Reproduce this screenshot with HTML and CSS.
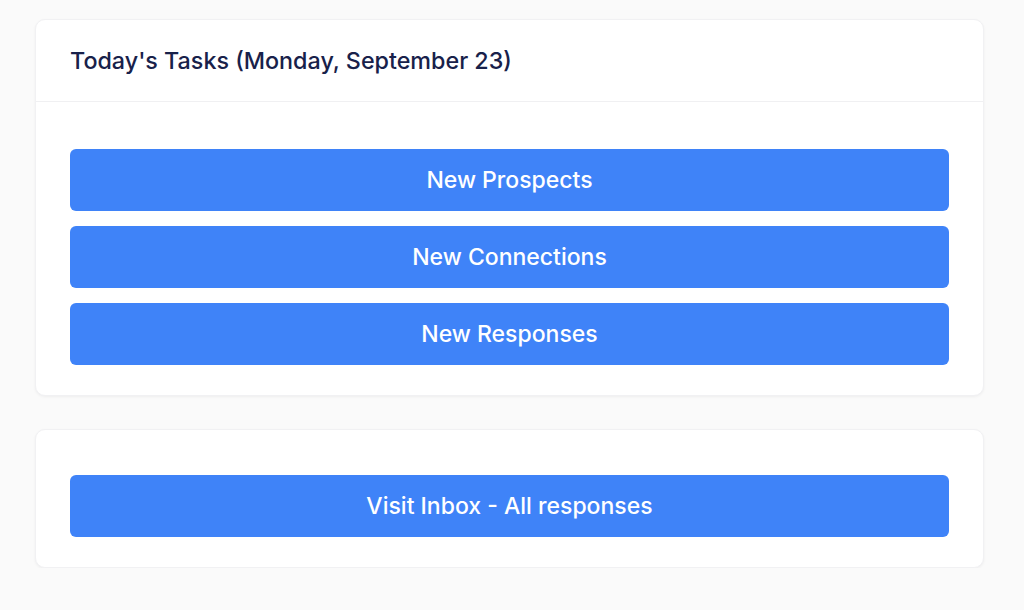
FILE: index.html
```html
<!DOCTYPE html>
<html>
<head>
<meta charset="utf-8">
<link rel="stylesheet" href="styles.css">
</head>
<body>
<main class="page">
  <section class="card">
    <header class="card-header">
      <h2 class="card-title">Today's Tasks (Monday, September 23)</h2>
    </header>
    <div class="card-body">
      <button class="btn">New Prospects</button>
      <button class="btn">New Connections</button>
      <button class="btn">New Responses</button>
    </div>
  </section>
  <section class="card">
    <div class="card-body card-body-solo">
      <button class="btn">Visit Inbox - All responses</button>
    </div>
  </section>
</main>
</body>
</html>
```
FILE: styles.css
```css
html, body {
  margin: 0;
  padding: 0;
  background: #fafafa;
  font-family: Inter, "Noto Sans", sans-serif;
}
.page {
  padding: 19px 40px 0 35px;
  display: flex;
  flex-direction: column;
  gap: 33px;
}
.card {
  background: #ffffff;
  border: 1px solid #f1f1f3;
  border-radius: 10px;
  box-shadow: 0 1px 3px rgba(0, 0, 0, 0.05);
}
.card-header {
  height: 81px;
  border-bottom: 1px solid #f0f0f2;
  display: flex;
  align-items: center;
  padding: 0 34px;
}
.card-title {
  margin: 0;
  font-size: 23.3px;
  font-weight: 500;
  color: #18214a;
  letter-spacing: 0;
}
.card-body {
  display: flex;
  flex-direction: column;
  gap: 15px;
  padding: 47px 34px 30px;
}
.card-body-solo {
  padding-top: 45px;
}
.btn {
  height: 62px;
  border: none;
  border-radius: 6px;
  background: #3f83f8;
  color: #ffffff;
  font-family: Inter, "Noto Sans", sans-serif;
  font-size: 23px;
  font-weight: 500;
  padding: 0;
  cursor: pointer;
}
```
